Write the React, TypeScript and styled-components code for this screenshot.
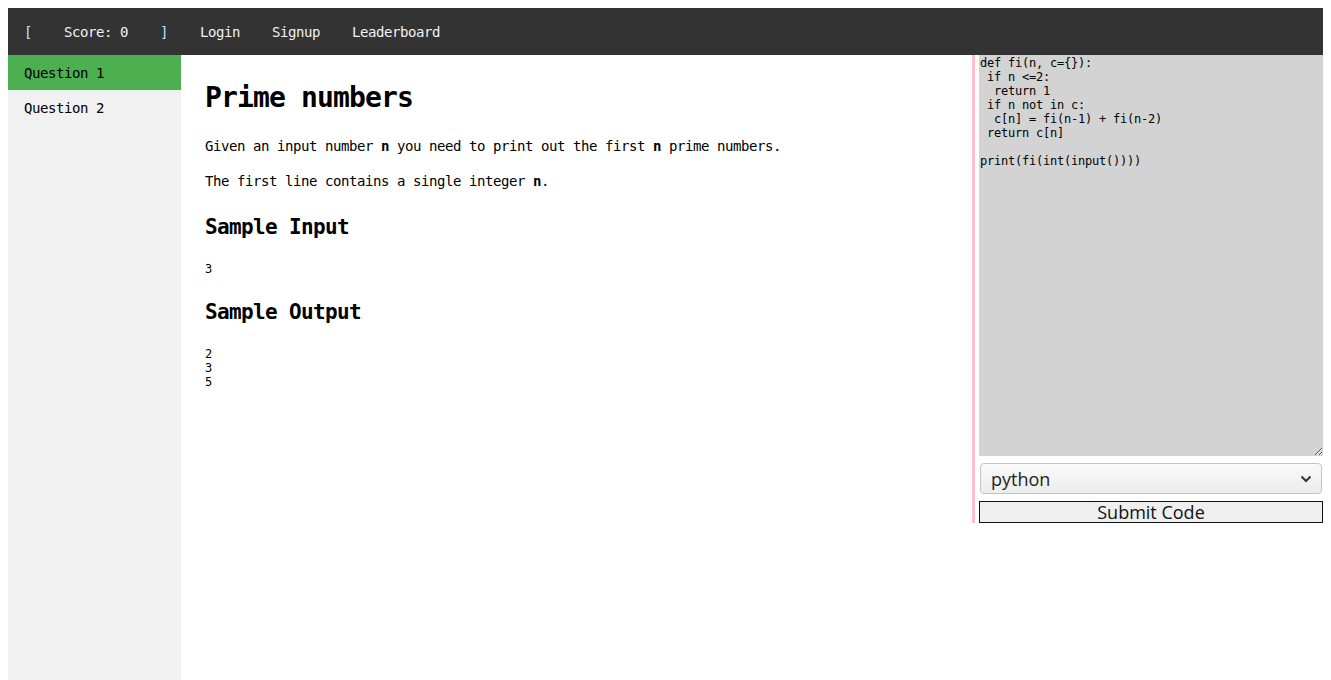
import React from 'react'
import styled, { createGlobalStyle } from 'styled-components'

const GlobalStyle = createGlobalStyle`
    body {
        margin: 8px;
        font-family: "DejaVu Sans Mono", monospace;
        color: #000;
        background: #fff;
    }
`

const mono = `"DejaVu Sans Mono", "Liberation Mono", monospace`

const TopNav = styled.ul`
    display: flex;
    margin: 0;
    padding: 0;
    list-style: none;
    background: #333;
    height: 47px;
`

interface NavLinkProps {
    bracket?: boolean
}

const NavLink = styled.li<NavLinkProps>`
    padding: 15px 16px 13px;
    font-family: ${mono};
    font-size: 14px;
    letter-spacing: -0.43px;
    line-height: 19px;
    color: ${(p) => (p.bracket ? '#bfe3ff' : '#f2f2f2')};
    white-space: pre;
`

const Layout = styled.div`
    display: flex;
    align-items: flex-start;
`

const SideBar = styled.ul`
    margin: 0;
    padding: 0;
    list-style: none;
    width: 173px;
    flex-shrink: 0;
    min-height: calc(100vh - 55px);
    background: #f1f1f1;
`

interface SideItemProps {
    active?: boolean
}

const SideItem = styled.li<SideItemProps>`
    padding: 9px 16px 7px;
    font-family: ${mono};
    font-size: 14px;
    letter-spacing: -0.43px;
    line-height: 19px;
    background: ${(p) => (p.active ? '#4caf50' : 'transparent')};
    color: #000;
`

const Problem = styled.div`
    flex: 1;
    padding-left: 24px;
    font-family: ${mono};

    h1 {
        margin: 23px 0 19px;
        font-size: 28px;
        letter-spacing: -0.86px;
        line-height: 40px;
        font-weight: bold;
    }

    p {
        margin: 16px 0;
        font-size: 14px;
        letter-spacing: -0.43px;
        line-height: 19px;
    }

    h2 {
        margin: 21px 0 20px;
        font-size: 21px;
        letter-spacing: -0.64px;
        line-height: 30px;
        font-weight: bold;
    }

    pre {
        margin: 13px 0;
        font-family: ${mono};
        font-size: 12px;
        line-height: 14px;
    }
`

const Editor = styled.div`
    width: 344px;
    flex-shrink: 0;
    border-left: 3px solid #ffc0cb;
    padding-left: 4px;
    display: flex;
    flex-direction: column;
    gap: 7px;
`

const CodeArea = styled.textarea`
    display: block;
    box-sizing: border-box;
    width: 344px;
    height: 401px;
    margin: 0;
    padding: 1px;
    border: none;
    outline: none;
    background: #d3d3d3;
    font-family: ${mono};
    font-size: 12px;
    letter-spacing: -0.22px;
    line-height: 14px;
    color: #000;
`

const SelectWrap = styled.div`
    position: relative;
    margin: 0 1px;
`

const LangSelect = styled.select`
    appearance: none;
    box-sizing: border-box;
    width: 100%;
    height: 31px;
    margin: 0;
    padding: 0 30px 0 10px;
    border: 1px solid #c4c4c4;
    border-radius: 4px;
    background: linear-gradient(#fafafa, #ececec);
    font-family: "Open Sans", "Noto Sans", sans-serif;
    font-size: 18px;
    color: #222;
`

const Chevron = styled.svg`
    position: absolute;
    right: 10px;
    top: 12px;
    pointer-events: none;
`

const SubmitButton = styled.button`
    box-sizing: border-box;
    width: 344px;
    height: 22px;
    margin: 0;
    padding: 0;
    border: 1px solid #111;
    background: #efefef;
    font-family: "Open Sans", "Noto Sans", sans-serif;
    font-size: 18px;
    line-height: 20px;
    color: #111;
`

const code = `def fi(n, c={}):
 if n <=2:
  return 1
 if n not in c:
  c[n] = fi(n-1) + fi(n-2)
 return c[n]

print(fi(int(input())))`

const App = () => {
    return (
        <>
            <GlobalStyle />
            <TopNav>
                <NavLink bracket>[</NavLink>
                <NavLink>Score: 0</NavLink>
                <NavLink bracket>]</NavLink>
                <NavLink>Login</NavLink>
                <NavLink>Signup</NavLink>
                <NavLink>Leaderboard</NavLink>
            </TopNav>

            <Layout>
                <SideBar>
                    <SideItem active>Question 1</SideItem>
                    <SideItem>Question 2</SideItem>
                </SideBar>

                <Problem>
                    <h1>Prime numbers</h1>
                    <p>Given an input number <b>n</b> you need to print out the first <b>n</b> prime numbers.</p>
                    <p>The first line contains a single integer <b>n</b>.</p>
                    <h2>Sample Input</h2>
                    <pre>3</pre>
                    <h2>Sample Output</h2>
                    <pre>{'2\n3\n5'}</pre>
                </Problem>

                <Editor>
                    <CodeArea defaultValue={code} spellCheck={false} />
                    <SelectWrap>
                        <LangSelect defaultValue="python">
                            <option value="python">python</option>
                            <option value="cpp">cpp</option>
                            <option value="java">java</option>
                        </LangSelect>
                        <Chevron width="12" height="8" viewBox="0 0 12 8">
                            <path d="M1.5 1.5 L6 6 L10.5 1.5" fill="none" stroke="#333" strokeWidth="2" />
                        </Chevron>
                    </SelectWrap>
                    <SubmitButton>Submit Code</SubmitButton>
                </Editor>
            </Layout>
        </>
    )
}

export default App
